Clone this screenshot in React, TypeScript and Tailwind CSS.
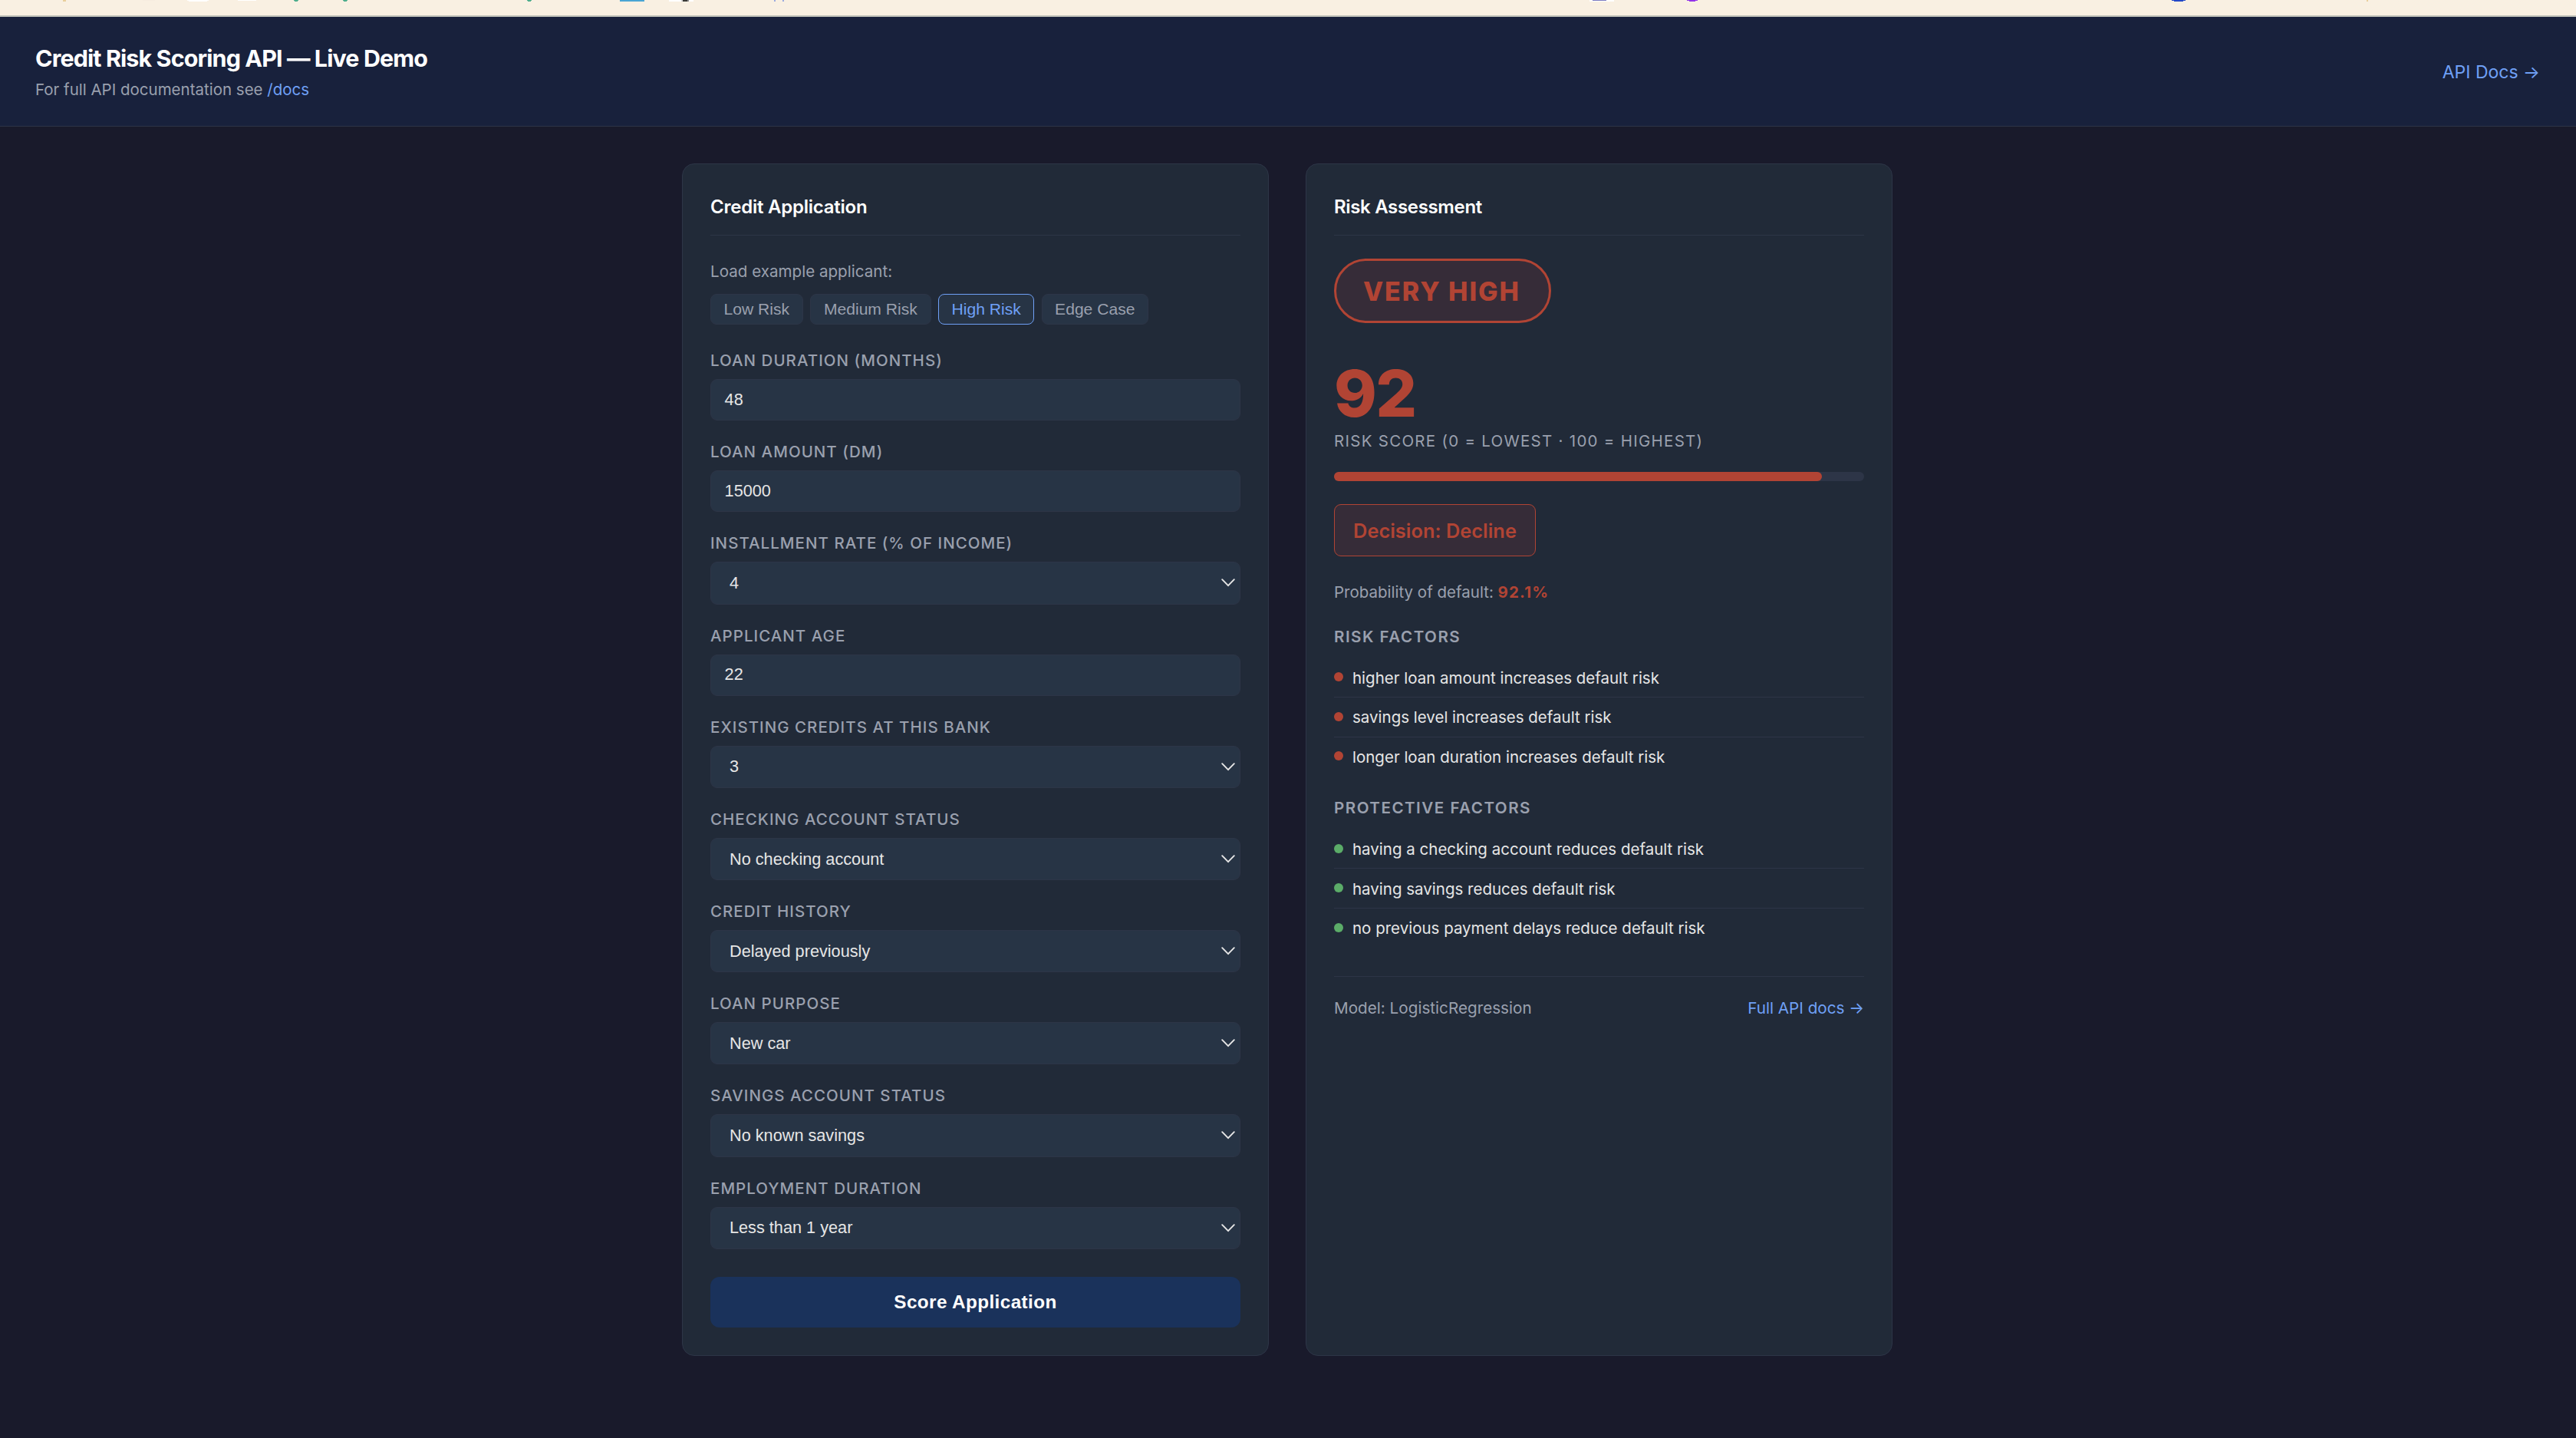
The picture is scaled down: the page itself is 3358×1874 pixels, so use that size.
import React from "react";

const fields = [
    { label: "Loan Duration (months)", value: "48", select: false },
    { label: "Loan Amount (DM)", value: "15000", select: false },
    { label: "Installment Rate (% of income)", value: "4", select: true },
    { label: "Applicant Age", value: "22", select: false },
    { label: "Existing Credits at this Bank", value: "3", select: true },
    { label: "Checking Account Status", value: "No checking account", select: true },
    { label: "Credit History", value: "Delayed previously", select: true },
    { label: "Loan Purpose", value: "New car", select: true },
    { label: "Savings Account Status", value: "No known savings", select: true },
    { label: "Employment Duration", value: "Less than 1 year", select: true },
];

const examples = [
    { name: "Low Risk", width: "w-[120.6px]" },
    { name: "Medium Risk", width: "w-[157.4px]" },
    { name: "High Risk", width: "w-[125px]", active: true },
    { name: "Edge Case", width: "w-[139px]" },
];

const riskFactors = [
    "higher loan amount increases default risk",
    "savings level increases default risk",
    "longer loan duration increases default risk",
];

const protectiveFactors = [
    "having a checking account reduces default risk",
    "having savings reduces default risk",
    "no previous payment delays reduce default risk",
];

// bottom sliver of the browser's bookmarks bar
function BrowserStrip() {
    return (
        <div className="h-[22px] bg-[#f9f0e2] border-b-2 border-[#bfc1b8]">
            <svg width="3358" height="2" className="block">
                <rect x="82" width="4" height="2" fill="#e9cf9c" />
                <rect x="186" width="16" height="1" fill="#f6ece0" />
                <rect x="244" width="28" height="1" fill="#ffffff" />
                <rect x="246" width="24" height="2" fill="#ffffff" />
                <rect x="310" width="24" height="1" fill="#ffffff" />
                <rect x="383" width="6" height="1" fill="#4fae8d" />
                <rect x="384" width="4" height="2" fill="#4fae8d" />
                <rect x="447" width="6" height="1" fill="#4fae8d" />
                <rect x="448" width="4" height="2" fill="#4fae8d" />
                <rect x="687" width="6" height="1" fill="#4fae8d" />
                <rect x="688" width="4" height="2" fill="#4fae8d" />
                <rect x="808" width="32" height="2" fill="#4aa5d4" />
                <rect x="872" width="32" height="2" fill="#ffffff" />
                <rect x="888" width="2" height="2" fill="#d8d8d8" />
                <rect x="890" width="6" height="2" fill="#3a3a38" />
                <rect x="896" width="2" height="2" fill="#8c8c8c" />
                <rect x="1009" width="2" height="2" fill="#9aaadf" />
                <rect x="1020" width="2" height="2" fill="#9aaadf" />
                <rect x="2072" width="32" height="2" fill="#ffffff" />
                <rect x="2076" width="18" height="1" fill="#7d7dc0" />
                <rect x="2199" width="14" height="1" fill="#9333ea" />
                <rect x="2202" width="8" height="2" fill="#9333ea" />
                <rect x="2831" width="18" height="1" fill="#2348c8" />
                <rect x="2834" width="12" height="2" fill="#2348c8" />
                <rect x="3085" width="2" height="2" fill="#e9cf9c" />
            </svg>
        </div>
    );
}

function Field({ label, value, select }: { label: string; value: string; select: boolean }) {
    return (
        <div className="pt-[25px]">
            <div className="h-10 text-[20.5px] leading-[31px] font-medium uppercase tracking-[0.05em] text-[#9aa0ae]">
                {label}
            </div>
            {select ? (
                <div className="h-[55.2px] flex items-center justify-between rounded-[9px] border border-[#2d3547] bg-[#273445] pl-6 pr-[6px] font-['Liberation_Sans',Arial,sans-serif] text-[21.7px] text-[#e6e6e6]">
                    <span className="pt-px">{value}</span>
                    <svg width="18" height="11" viewBox="0 0 18 11" fill="none" stroke="#e6e6e6" strokeWidth="1.9" strokeLinecap="round" strokeLinejoin="round">
                        <path d="M1.2 1.2 9 9.2l7.8-8" />
                    </svg>
                </div>
            ) : (
                <div className="h-[54px] flex items-center rounded-[9px] border border-[#2d3547] bg-[#273445] px-[17.6px] font-['Liberation_Sans',Arial,sans-serif] text-[21.7px] text-[#e6e6e6]">
                    {value}
                </div>
            )}
        </div>
    );
}

function FactorList({ items, dot }: { items: string[]; dot: string }) {
    return (
        <ul className="divide-y divide-[#2d3547]">
            {items.map((item) => (
                <li key={item} className="flex items-center gap-3 h-[51.6px] pb-px last:pb-[2px] text-[20.5px] text-[#e6e6e6]">
                    <span className={"size-3 shrink-0 rounded-full " + dot} />
                    <span className="pt-1">{item}</span>
                </li>
            ))}
        </ul>
    );
}

export default function App() {
    return (
        <div className="h-[1874px] overflow-hidden bg-[#191a2b] font-[Inter,sans-serif]">
            <BrowserStrip />

            <header className="h-[143px] flex items-center justify-between border-b border-[#2d3547] bg-[#18213c] pl-[46px] pr-[47px]">
                <div className="pt-px">
                    <h1 className="text-[30.5px] leading-[46px] font-bold tracking-[-0.03em] text-white">
                        Credit Risk Scoring API — Live Demo
                    </h1>
                    <p className="text-[20.5px] leading-[35px] text-[#9aa0ae]">
                        For full API documentation see <a className="text-[#6fa0f6]">/docs</a>
                    </p>
                </div>
                <a className="pt-[2px] text-[23px] text-[#6fa0f6]">API Docs →</a>
            </header>

            <main className="flex justify-center gap-12 pt-12 pr-[2px]">
                {/* Application form */}
                <section className="w-[765px] h-[1554px] rounded-2xl border border-[#2d3547] bg-[#212a38] px-9 pt-9">
                    <h2 className="h-[57px] border-b border-[#2d3547] text-[24px] leading-[40px] font-semibold tracking-[-0.01em] text-white">
                        Credit Application
                    </h2>
                    <p className="mt-[31px] h-[45px] text-[20.6px] leading-[32px] text-[#9aa0ae]">Load example applicant:</p>
                    <div className="flex gap-[9.6px]">
                        {examples.map((e) => (
                            <button
                                key={e.name}
                                className={
                                    "h-10 rounded-lg border bg-[#273445] font-['Liberation_Sans',Arial,sans-serif] text-[21.1px] " +
                                    e.width +
                                    (e.active ? " border-[#6fa0f6] text-[#6fa0f6]" : " border-[#2d3547] text-[#9aa0ae]")
                                }
                            >
                                {e.name}
                            </button>
                        ))}
                    </div>
                    <div className="mt-[6.4px]">
                        {fields.map((f) => (
                            <Field key={f.label} {...f} />
                        ))}
                    </div>
                    <button className="mt-[36.2px] w-full h-[66px] rounded-xl bg-[#1a325b] pt-px font-['Liberation_Sans',Arial,sans-serif] text-[24.3px] font-bold tracking-[0.016em] text-white">
                        Score Application
                    </button>
                </section>

                {/* Result */}
                <section className="w-[765px] h-[1554px] rounded-2xl border border-[#2d3547] bg-[#212a38] px-9 pt-9">
                    <h2 className="h-[57px] border-b border-[#2d3547] text-[24px] leading-[40px] font-semibold tracking-[-0.014em] text-white">
                        Risk Assessment
                    </h2>
                    <div className="mt-[30px] w-[283px] h-[84px] flex items-center justify-center rounded-full border-3 border-[#b14434] bg-[#362c38] pr-[2px] text-[34px] font-extrabold tracking-[0.057em] text-[#b14434]">
                        VERY HIGH
                    </div>
                    <div className="mt-[49px] h-[84px] text-[84.5px] leading-[84px] font-extrabold tracking-[-0.02em] text-[#b14434]">92</div>
                    <div className="mt-[5px] h-[32px] text-[20.5px] leading-[32px] uppercase tracking-[0.062em] text-[#9aa0ae]">
                        Risk Score (0 = lowest · 100 = highest)
                    </div>
                    <div className="mt-[24px] h-3 rounded-md bg-[#2d3547]">
                        <div className="h-3 w-[92.1%] rounded-md bg-[#b14434]" />
                    </div>
                    <div className="mt-[30px] w-[263px] h-[68px] flex items-center justify-center rounded-[9px] border border-[#b14434] bg-[#362c38] pt-[2px] text-[25.4px] font-semibold text-[#b14434]">
                        Decision: Decline
                    </div>
                    <p className="mt-[31px] h-[32px] text-[20.5px] leading-[32px] text-[#9aa0ae]">
                        Probability of default: <strong className="font-bold tracking-[0.055em] text-[#b14434]">92.1%</strong>
                    </p>

                    <h3 className="mt-[26px] h-[32px] text-[20.6px] leading-[32px] font-semibold tracking-[0.072em] text-[#9aa0ae]">RISK FACTORS</h3>
                    <div className="mt-[11.4px]">
                        <FactorList items={riskFactors} dot="bg-[#b14434]" />
                    </div>

                    <h3 className="mt-[25.2px] h-[32px] text-[20.6px] leading-[32px] font-semibold tracking-[0.072em] text-[#9aa0ae]">PROTECTIVE FACTORS</h3>
                    <div className="mt-[11.4px]">
                        <FactorList items={protectiveFactors} dot="bg-[#5bac68]" />
                    </div>

                    <div className="mt-[36.2px] flex justify-between border-t border-[#2d3547] pt-[25px] text-[20.7px] leading-[32px]">
                        <span className="text-[#9aa0ae]">Model: LogisticRegression</span>
                        <a className="text-[#6fa0f6]">Full API docs →</a>
                    </div>
                </section>
            </main>
        </div>
    );
}
